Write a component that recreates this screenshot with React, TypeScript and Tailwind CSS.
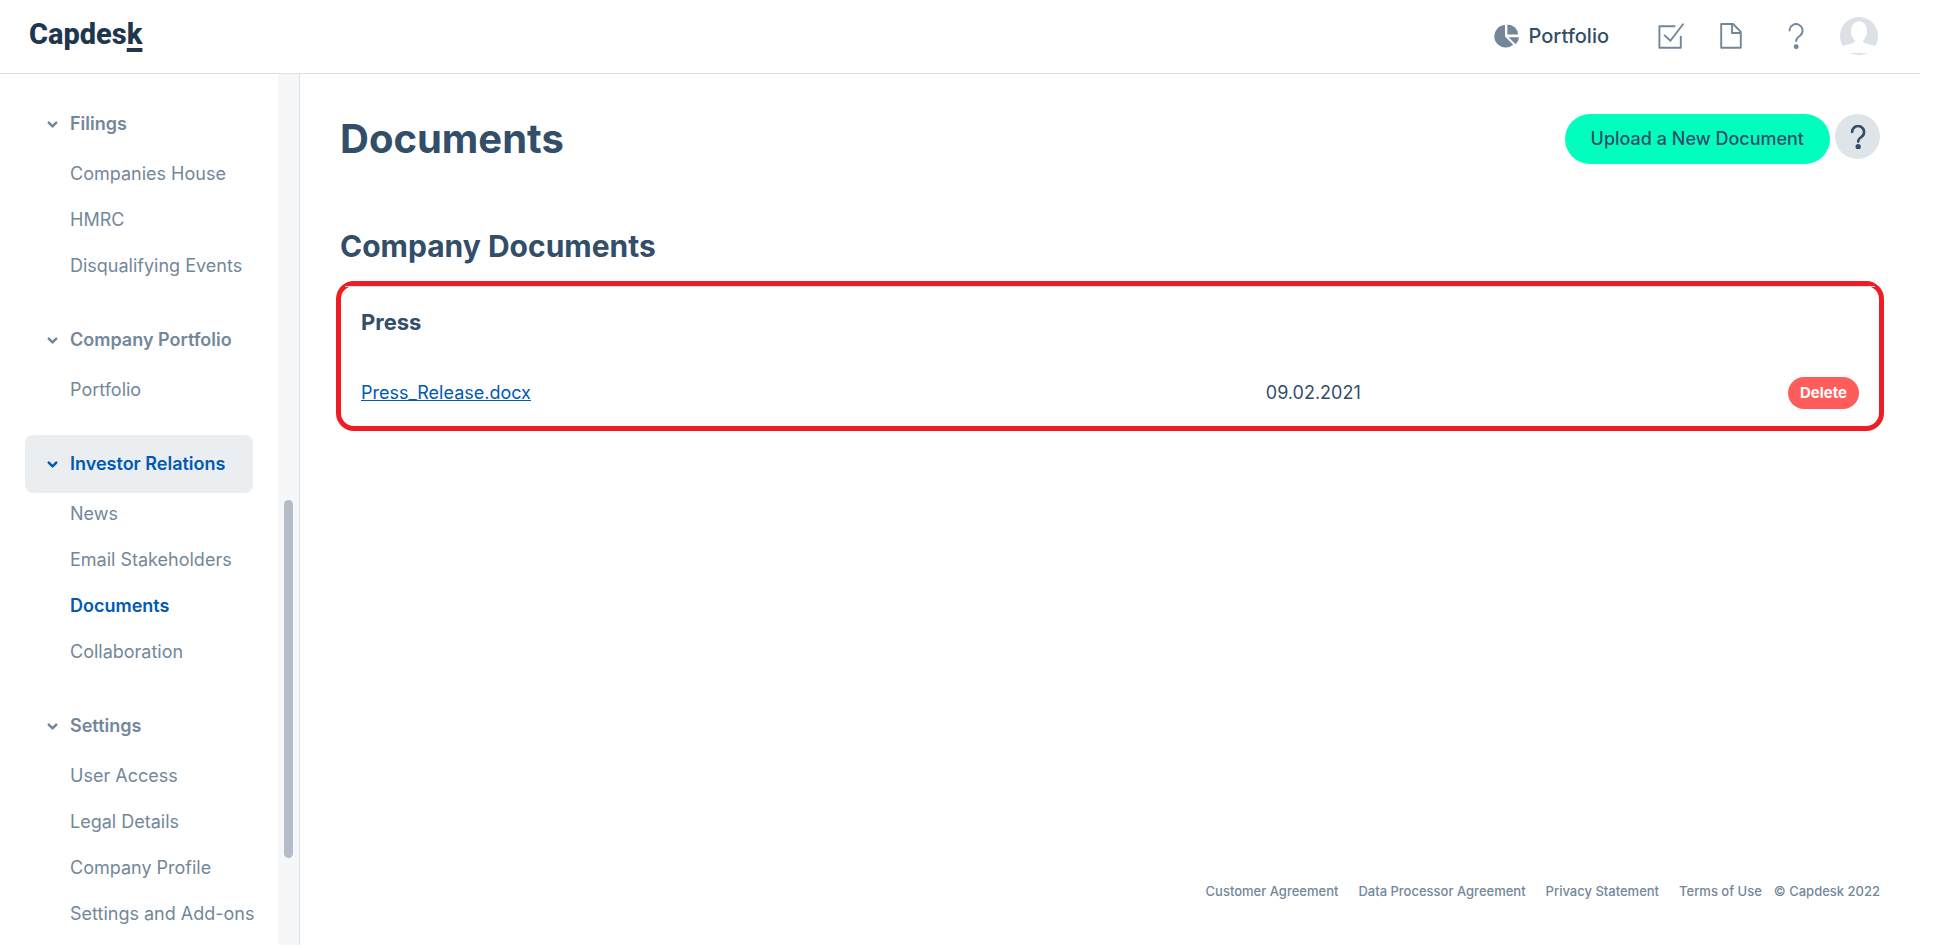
import { ChevronDown } from "lucide-react";

const NAV = [
  { title: "Filings", items: ["Companies House", "HMRC", "Disqualifying Events"] },
  { title: "Company Portfolio", items: ["Portfolio"] },
  { title: "Investor Relations", active: true, items: ["News", "Email Stakeholders", "Documents", "Collaboration"] },
  { title: "Settings", items: ["User Access", "Legal Details", "Company Profile", "Settings and Add-ons"] }
];

const DOCUMENTS = [{ name: "Press_Release.docx", date: "09.02.2021" }];

const FOOTER_LINKS = ["Customer Agreement", "Data Processor Agreement", "Privacy Statement", "Terms of Use"];

function PieIcon() {
  return (
    <svg className="h-6 w-[26px]" viewBox="0 0 26 24" fill="#73879b" aria-hidden="true">
      <path d="M11 1.1V12.6L19.2 20.8A11 11 0 0 1 12 23.5 11.2 11.2 0 1 1 11 1.1Z" />
      <path d="M13.4 0.4A10.6 10.6 0 0 1 24 10.6H13.4Z" />
      <path d="M14.6 13.2H25A11 11 0 0 1 21.7 20.2Z" />
    </svg>
  );
}

function TaskIcon() {
  return (
    <svg className="h-[26px] w-[26px]" viewBox="0 0 26 26" fill="none" stroke="#73879b" strokeWidth="1.9" strokeLinecap="round" strokeLinejoin="round" aria-hidden="true">
      <path d="M16.5 3.2H1.4V24.8H22.8V13.6" />
      <path d="M6.6 12.4L12.4 17.8L25 1.2" />
    </svg>
  );
}

function FileIcon() {
  return (
    <svg className="h-[26px] w-[22px]" viewBox="0 0 22 26" fill="none" stroke="#73879b" strokeWidth="1.9" strokeLinejoin="round" aria-hidden="true">
      <path d="M1.2 1H13.2L20.8 8.8V24.8H1.2Z" />
      <path d="M12 1V10H20.8" />
    </svg>
  );
}

function QuestionIcon({ className }: { className: string }) {
  return (
    <svg className={className} viewBox="0 0 16 26" fill="none" stroke="currentColor" strokeLinecap="round" aria-hidden="true">
      <path d="M1.6 7.6A6.5 6.5 0 1 1 11.4 13.2C9.2 14.6 8.2 15.2 8.2 18" />
      <circle cx="8.2" cy="23.6" r="1.5" fill="currentColor" />
    </svg>
  );
}

function Avatar() {
  return (
    <svg className="h-[38px] w-[38px]" viewBox="0 0 38 38" aria-hidden="true">
      <circle cx="19" cy="19" r="19" fill="#dce1e8" />
      <path d="M19 4.2C24 4.2 27 8.6 27 14.4C27 18 25.4 21.6 23 23.4C23 26 26 26.4 37 29.6A19 19 0 0 1 27.5 36H10.5A19 19 0 0 1 1 29.6C12 26.4 15 26 15 23.4C12.6 21.6 11 18 11 14.4C11 8.6 14 4.2 19 4.2Z" fill="#fff" />
    </svg>
  );
}

function Header() {
  return (
    <header className="flex h-[74px] items-center justify-between border-b border-[#dbdfe6] pr-[42px] pb-0.5 pl-[29px]">
      <a href="#" className="pb-1 font-['Roboto',sans-serif] text-[29px] leading-8 font-extrabold text-[#20364d]">
        Capdes<span className="underline decoration-4 underline-offset-4">k</span>
      </a>
      <div className="flex items-center">
        <a href="#" className="flex items-center gap-[9px] text-xl font-medium">
          <PieIcon />
          Portfolio
        </a>
        <a href="#" className="ml-[49px]" aria-label="Tasks">
          <TaskIcon />
        </a>
        <a href="#" className="ml-9" aria-label="Files">
          <FileIcon />
        </a>
        <button className="ml-[46px] text-[#73879b]" aria-label="Help">
          <QuestionIcon className="h-[26px] w-4 stroke-[1.9]" />
        </button>
        <button className="ml-9" aria-label="Account">
          <Avatar />
        </button>
      </div>
    </header>
  );
}

function Sidebar() {
  return (
    <aside className="flex w-[300px] shrink-0 border-r border-[#dbdfe6]">
      <nav className="flex min-w-0 flex-1 flex-col gap-6 pt-[21px] pr-[25px] pl-[25px] text-lg text-[#73879b]">
        {NAV.map((group) => (
          <section key={group.title}>
            <button
              className={`flex h-[58px] w-full items-center gap-2.5 rounded-lg pl-5 font-semibold ${group.active ? "bg-[#eaeef1] text-[#0059b3]" : ""}`}
            >
              <ChevronDown className="h-[15px] w-[15px]" strokeWidth={4} />
              {group.title}
            </button>
            <ul className="flex flex-col gap-1 pl-[45px]">
              {group.items.map((item) => (
                <li key={item}>
                  <a
                    href="#"
                    className={`flex h-[42px] items-center whitespace-nowrap ${item === "Documents" ? "font-semibold text-[#0059b3]" : ""}`}
                  >
                    {item}
                  </a>
                </li>
              ))}
            </ul>
          </section>
        ))}
      </nav>
      <div className="flex w-[21px] flex-col items-center bg-[#f5f7f9]">
        <div className="grow-[426]" />
        <div className="w-[9px] grow-[359] rounded-full bg-[#b3bdc8]" />
        <div className="grow-[87]" />
      </div>
    </aside>
  );
}

function DocumentGroup() {
  return (
    <section className="-mx-1 mt-[17px] rounded-[18px] border-[5px] border-[#ee1c24]">
      <div className="mx-1 border-t border-[#dbdfe6] px-4 pt-[19px] pb-0.5">
        <h3 className="text-[22px] leading-8 font-bold">Press</h3>
        <table className="mt-6 w-full table-fixed text-left text-lg">
          <tbody>
            {DOCUMENTS.map((doc) => (
              <tr key={doc.name} className="h-[62px]">
                <td className="w-[60%]">
                  <a href="#" className="text-[#0059b3] underline">
                    {doc.name}
                  </a>
                </td>
                <td className="pl-1.5">{doc.date}</td>
                <td className="text-right">
                  <button className="h-8 rounded-full bg-[#ff5c5c] px-3 text-[15px] font-bold text-white">Delete</button>
                </td>
              </tr>
            ))}
          </tbody>
        </table>
      </div>
    </section>
  );
}

function Footer() {
  return (
    <footer className="mt-auto flex items-center justify-end gap-3 text-[13px] font-medium text-[#73879b]">
      <nav className="flex gap-5">
        {FOOTER_LINKS.map((link) => (
          <a key={link} href="#">
            {link}
          </a>
        ))}
      </nav>
      <span>© Capdesk 2022</span>
    </footer>
  );
}

export default function App() {
  return (
    <div className="flex min-h-screen flex-col bg-white pr-[26px] pb-[3px] font-['Inter',sans-serif] text-[#334e68]">
      <Header />
      <div className="flex flex-1">
        <Sidebar />
        <main className="flex min-w-0 flex-1 flex-col px-10 pt-10 pb-11">
          <div className="flex items-start justify-between">
            <h1 className="text-[40px] leading-[50px] font-bold">Documents</h1>
            <div className="flex items-start gap-[5px]">
              <button className="h-[50px] rounded-full bg-[#00ffbf] px-[26px] text-lg font-medium">Upload a New Document</button>
              <button className="grid h-[45px] w-[45px] place-items-center rounded-full bg-[#dfe4e9]" aria-label="Page help">
                <QuestionIcon className="h-6 w-4 stroke-[2.8]" />
              </button>
            </div>
          </div>
          <h2 className="mt-16 text-[30px] leading-9 font-bold">Company Documents</h2>
          <DocumentGroup />
          <Footer />
        </main>
      </div>
    </div>
  );
}
